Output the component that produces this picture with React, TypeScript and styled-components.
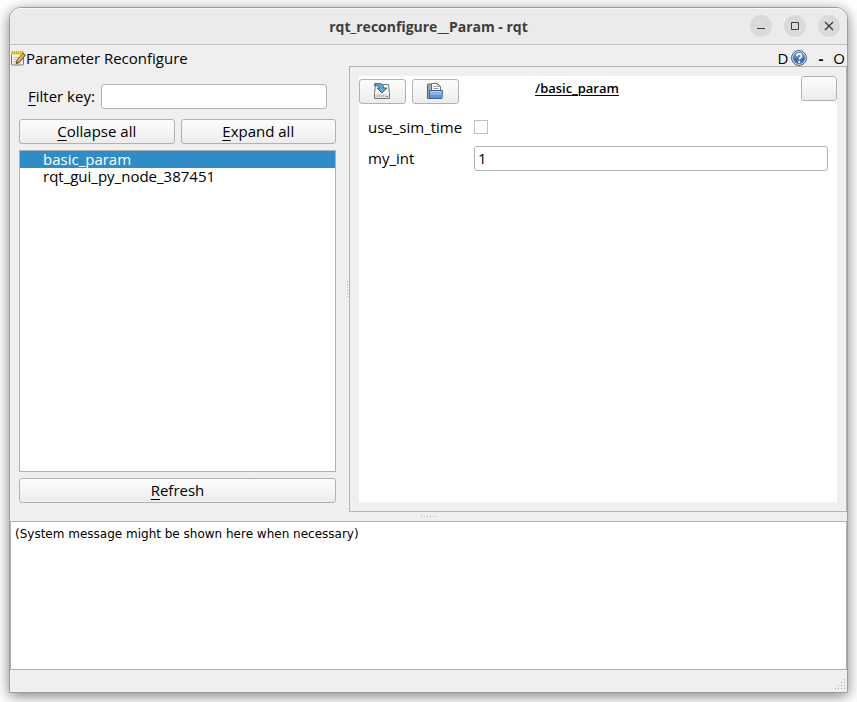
import React, { useState } from "react";
import styled, { createGlobalStyle, css } from "styled-components";

const GlobalStyle = createGlobalStyle`
  * { box-sizing: border-box; }
  body {
    margin: 0;
    background: #fff;
    color: #000;
    font: 15px/20px "Open Sans", "Noto Sans", sans-serif;
  }
  button, input { font: inherit; color: inherit; }
`;

const Desktop = styled.div`
  display: flex;
  min-height: 100vh;
  padding: 7px 9px 9px;
`;

const Window = styled.main`
  flex: 1;
  min-width: 0;
  display: flex;
  flex-direction: column;
  border: 1px solid #9d9d9d;
  border-radius: 12px 12px 0 0;
  background: #efefef;
  box-shadow: 0 3px 14px rgba(0, 0, 0, 0.5);
`;

const TitleBar = styled.header`
  display: grid;
  grid-template-columns: 1fr auto 1fr;
  align-items: center;
  height: 37px;
  padding: 0 7px;
  border-bottom: 1px solid #bfbfbf;
  border-top: 1px solid #f9f9f9;
  border-radius: 11px 11px 0 0;
  background: #ebebeb;
`;

const WindowTitle = styled.h1`
  grid-column: 2;
  margin: 0;
  font-size: 14px;
  line-height: 20px;
  font-weight: 700;
  color: #3d3d3d;
`;

const WindowControls = styled.div`
  display: flex;
  justify-content: flex-end;
  gap: 12px;
  padding-bottom: 2px;
`;

const RoundButton = styled.button`
  display: grid;
  place-items: center;
  width: 22px;
  height: 22px;
  padding: 0;
  border: 0;
  border-radius: 50%;
  background: #dadada;
  color: #3d3d3d;
`;

const DockHeader = styled.div`
  display: flex;
  align-items: center;
  height: 21px;
  padding: 5px 2px 0 0;
`;

const DockTitle = styled.h2`
  margin: 0;
  flex: 1;
  font-size: 15px;
  line-height: 20px;
  font-weight: 400;
`;

const FlatButton = styled.button<{ $width: number }>`
  display: grid;
  place-items: center;
  width: ${(p) => p.$width}px;
  height: 20px;
  padding: 0;
  border: 0;
  background: none;
`;

const Dock = styled.div`
  flex: 1;
  display: grid;
  grid-template-columns: 336px 3px minmax(0, 1fr);
`;

const Selector = styled.section`
  display: flex;
  flex-direction: column;
  gap: 6px;
  padding: 18px 10px 9px 9px;
`;

const FilterRow = styled.div`
  display: flex;
  align-items: center;
  gap: 6px;
  padding: 0 9px;
  margin-bottom: 4px;
`;

const FieldLabel = styled.label`
  padding-bottom: 2px;
`;

const field = css`
  height: 25px;
  border: 1px solid #b1b1b1;
  border-radius: 3px;
  background: #fff;
  outline: none;
`;

const TextBox = styled.input`
  ${field}
  flex: 1;
  min-width: 0;
  width: 100%;
  padding: 0 3px 2px;
`;

const PushButton = styled.button`
  display: flex;
  align-items: center;
  justify-content: center;
  width: 100%;
  height: 25px;
  padding: 0 0 2px;
  border: 1px solid #b1b1b1;
  border-radius: 3px;
  background: linear-gradient(#fdfdfd, #ececec);
`;

const ButtonRow = styled.div`
  display: grid;
  grid-auto-flow: column;
  grid-auto-columns: 1fr;
  gap: 6px;
`;

const Mnemonic = styled.span`
  text-decoration: underline;
  text-decoration-thickness: 1px;
  text-underline-offset: 3px;
`;

const NodeList = styled.ul`
  flex: 1;
  margin: 0;
  padding: 0;
  border: 1px solid #b1b1b1;
  background: #fff;
  list-style: none;
`;

const NodeItem = styled.button<{ $selected: boolean }>`
  display: block;
  width: 100%;
  height: 17px;
  padding: 0 23px;
  border: 0;
  background: ${(p) => (p.$selected ? "#308cc6" : "transparent")};
  color: ${(p) => (p.$selected ? "#fff" : "#000")};
  line-height: 17px;
  text-align: left;
`;

const Splitter = styled.div<{ $horizontal?: boolean }>`
  display: flex;
  align-items: center;
  justify-content: center;
  ${(p) => p.$horizontal && "height: 9px;"}
`;

const Dots = styled.div<{ $horizontal?: boolean }>`
  width: ${(p) => (p.$horizontal ? 16 : 1)}px;
  height: ${(p) => (p.$horizontal ? 1 : 16)}px;
  background: repeating-linear-gradient(
    ${(p) => (p.$horizontal ? "90deg" : "180deg")},
    #b5b5b5 0 1px,
    transparent 1px 3px
  );
`;

const EditorFrame = styled.section`
  display: flex;
  padding: 9px;
  border: 1px solid #b1b1b1;
`;

const Editor = styled.div`
  flex: 1;
  min-width: 0;
  background: #fff;
`;

const EditorBar = styled.div`
  display: grid;
  grid-template-columns: 47px 47px 2fr 1fr 36px;
  column-gap: 6px;
  align-items: start;
`;

const ToolSlot = styled.div`
  padding-top: 3px;
`;

const NodeName = styled.h3`
  margin: 0;
  padding: 2px 0 0 8px;
  font-size: 13px;
  line-height: 20px;
  font-weight: 600;
  text-align: center;
  text-decoration: underline;
  text-decoration-thickness: 1px;
  text-underline-offset: 2px;
`;

const CloseSlot = styled.div`
  grid-column: 5;
`;

const Form = styled.div`
  display: grid;
  grid-template-columns: 100px minmax(0, 1fr);
  gap: 6px;
  align-items: center;
  padding: 11px 9px;
`;

const Check = styled.input`
  appearance: none;
  width: 14px;
  height: 14px;
  margin: 0;
  border: 1px solid #c0c0c0;
  background: #fff;
  &:checked { background: #308cc6; }
`;

const CheckCell = styled.div`
  display: flex;
  align-items: center;
  height: 25px;
  padding-bottom: 2px;
`;

const Message = styled.output`
  display: block;
  height: 149px;
  padding: 2px 4px;
  border: 1px solid #b1b1b1;
  background: #fff;
  font: 12px/20px "DejaVu Sans", sans-serif;
`;

const StatusBar = styled.footer`
  display: flex;
  align-items: flex-end;
  justify-content: flex-end;
  height: 22px;
  padding: 2px 1px;
`;

const NoteIcon = () => (
  <svg width="16" height="16" viewBox="0 0 16 16" aria-hidden="true">
    <rect x="1.5" y="2.5" width="12" height="12.5" rx="1" fill="#f3f3f1" stroke="#777" />
    <path d="M3.5 7.5h7M3.5 9.5h6M3.5 11.5h5M3.5 13h7" stroke="#c2c2c2" />
    <path d="M1 1.5h13v3.2H1z" fill="#f0d53a" />
    <path d="M2.5 1v3M4.5 1v3M6.5 1v3M8.5 1v3M10.5 1v3M12.5 1v3" stroke="#b99a10" strokeWidth=".7" />
    <path d="M13 3.2l2.4 2-6 7.2-3 1.2.5-3.2z" fill="#d59b38" stroke="#5a3a10" strokeWidth=".8" />
    <path d="M13.2 4.8L8.3 11" stroke="#f4d58a" />
    <path d="M6.4 13.6l.3-1.7 1.2 1z" fill="#222" />
  </svg>
);

const HelpIcon = () => (
  <svg width="16" height="16" viewBox="0 0 16 16" aria-hidden="true">
    <circle cx="8" cy="8" r="7.4" fill="#fff" stroke="#2b528c" />
    <circle cx="8" cy="8" r="6" fill="#3f6daa" stroke="#5f8bc4" strokeWidth=".6" />
    <path d="M2.5 7.5a5.5 5.5 0 0 1 11 0c-3 1.5-8 1.5-11 0" fill="#7399ca" opacity=".6" />
    <path d="M5.7 6.2c0-1.5 1-2.4 2.4-2.4s2.4.9 2.4 2.1c0 1.7-2.2 1.8-2.2 3.7" fill="none" stroke="#fff" strokeWidth="1.7" />
    <circle cx="8.2" cy="11.9" r="1.1" fill="#fff" />
  </svg>
);

const LoadIcon = () => (
  <svg width="17" height="16" viewBox="0 0 17 16" aria-hidden="true">
    <path d="M1.500 1.500h13l1 9v5H.500v-5z" fill="#f6f6f5" stroke="#777975" />
    <path d="M1 11h14v4H1z" fill="#dededc" />
    <path d="M3.500 12v2M5.500 12v2M7.500 12v2M9.500 12v2" stroke="#b0b2ae" />
    <path d="M11.500 13.500h2.500" stroke="#8f918c" />
    <path d="M.600.700C5.500-.200 9.700.700 9.700 5h3.200L8 10 3 5h3C5.800 3.200 4 2.400.600 2.800z" fill="#6da4c9" stroke="#285a7c" strokeWidth=".9" />
  </svg>
);

const SaveIcon = () => (
  <svg width="17" height="16" viewBox="0 0 17 16" aria-hidden="true">
    <path d="M.500 15.500v-14l1-.500h3.500l1 2h7v12.500z" fill="#a2a4a5" stroke="#5d5f5e" />
    <path d="M4.500.500h6l3 3v7h-9z" fill="#f8f8f8" stroke="#6c6e6b" />
    <path d="M10.500.500v3h3M6.500 3.500h3M6.500 5.500h5" fill="none" stroke="#9b9d99" />
    <path d="M2.500 7.500h13l-.500 8h-12.500z" fill="#8db2dd" stroke="#3465a4" />
    <path d="M3.500 8.500h11" stroke="#b5cfec" />
    <path d="M3 12h12v3H3z" fill="#6795cc" />
  </svg>
);

const Grip = () => (
  <svg width="11" height="11" viewBox="0 0 11 11" aria-hidden="true">
    <path d="M9 0h1v1H9zM6 3h1v1H6zM9 3h1v1H9zM3 6h1v1H3zM6 6h1v1H6zM9 6h1v1H9zM0 9h1v1H0zM3 9h1v1H3zM6 9h1v1H6zM9 9h1v1H9z" fill="#ababab" />
  </svg>
);

const nodes = ["basic_param", "rqt_gui_py_node_387451"];

export default function App() {
  const [selected, setSelected] = useState(nodes[0]);
  const [filter, setFilter] = useState("");
  const [value, setValue] = useState("1");

  return (
    <Desktop>
      <GlobalStyle />
      <Window>
        <TitleBar>
          <WindowTitle>rqt_reconfigure__Param - rqt</WindowTitle>
          <WindowControls>
            <RoundButton aria-label="Minimize">
              <svg width="10" height="10"><path d="M1 7.500h8" stroke="currentColor" /></svg>
            </RoundButton>
            <RoundButton aria-label="Maximize">
              <svg width="10" height="10"><path d="M1.500 1.500h7v7h-7z" fill="none" stroke="currentColor" /></svg>
            </RoundButton>
            <RoundButton aria-label="Close">
              <svg width="10" height="10"><path d="M1 1l8 8M9 1l-8 8" stroke="currentColor" strokeWidth="1.400" /></svg>
            </RoundButton>
          </WindowControls>
        </TitleBar>

        <DockHeader>
          <NoteIcon />
          <DockTitle>Parameter Reconfigure</DockTitle>
          <FlatButton $width={12}>D</FlatButton>
          <FlatButton $width={20} aria-label="Help"><HelpIcon /></FlatButton>
          <FlatButton $width={24}><b>-</b></FlatButton>
          <FlatButton $width={12}>O</FlatButton>
        </DockHeader>

        <Dock>
          <Selector>
            <FilterRow>
              <FieldLabel htmlFor="filter"><Mnemonic>F</Mnemonic>ilter key:</FieldLabel>
              <TextBox id="filter" value={filter} onChange={(e) => setFilter(e.target.value)} />
            </FilterRow>
            <ButtonRow>
              <PushButton><span><Mnemonic>C</Mnemonic>ollapse all</span></PushButton>
              <PushButton><span><Mnemonic>E</Mnemonic>xpand all</span></PushButton>
            </ButtonRow>
            <NodeList>
              {nodes.map((name) => (
                <li key={name}>
                  <NodeItem $selected={name === selected} onClick={() => setSelected(name)}>{name}</NodeItem>
                </li>
              ))}
            </NodeList>
            <ButtonRow>
              <PushButton><span><Mnemonic>R</Mnemonic>efresh</span></PushButton>
            </ButtonRow>
          </Selector>

          <Splitter><Dots /></Splitter>

          <EditorFrame>
            <Editor>
              <EditorBar>
                <ToolSlot><PushButton aria-label="Load parameters"><LoadIcon /></PushButton></ToolSlot>
                <ToolSlot><PushButton aria-label="Save parameters"><SaveIcon /></PushButton></ToolSlot>
                <NodeName>/basic_param</NodeName>
                <CloseSlot><PushButton aria-label="Close node" /></CloseSlot>
              </EditorBar>
              <Form>
                <FieldLabel htmlFor="use_sim_time">use_sim_time</FieldLabel>
                <CheckCell><Check id="use_sim_time" type="checkbox" /></CheckCell>
                <FieldLabel htmlFor="my_int">my_int</FieldLabel>
                <TextBox id="my_int" value={value} onChange={(e) => setValue(e.target.value)} />
              </Form>
            </Editor>
          </EditorFrame>
        </Dock>

        <Splitter $horizontal><Dots $horizontal /></Splitter>
        <Message>(System message might be shown here when necessary)</Message>
        <StatusBar><Grip /></StatusBar>
      </Window>
    </Desktop>
  );
}
